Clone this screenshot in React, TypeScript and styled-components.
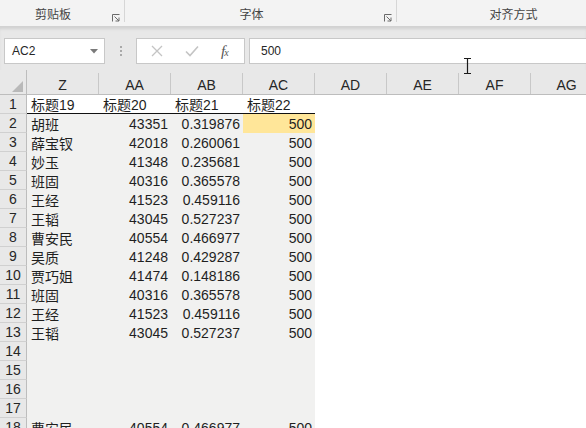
import styled, { createGlobalStyle } from "styled-components";

const GlobalStyle = createGlobalStyle`
  html, body {
    margin: 0;
    padding: 0;
    background: #ffffff;
  }
  body {
    font-family: "Liberation Sans", "Noto Sans CJK SC", sans-serif;
    overflow: hidden;
  }
`;

const COLS = ["Z", "AA", "AB", "AC", "AD", "AE", "AF", "AG"];

type Line = [string, string, string, string] | null;

// 1 = 表头行，其余为数据
const ROWS: Line[] = [
  ["标题19", "标题20", "标题21", "标题22"],
  ["胡班", "43351", "0.319876", "500"],
  ["薛宝钗", "42018", "0.260061", "500"],
  ["妙玉", "41348", "0.235681", "500"],
  ["班固", "40316", "0.365578", "500"],
  ["王经", "41523", "0.459116", "500"],
  ["王韬", "43045", "0.527237", "500"],
  ["曹安民", "40554", "0.466977", "500"],
  ["吴质", "41248", "0.429287", "500"],
  ["贾巧姐", "41474", "0.148186", "500"],
  ["班固", "40316", "0.365578", "500"],
  ["王经", "41523", "0.459116", "500"],
  ["王韬", "43045", "0.527237", "500"],
  null,
  null,
  null,
  null,
  ["曹安民", "40554", "0.466977", "500"],
];

const GROUPS = [
  { label: "剪贴板", width: 125, launcher: true },
  { label: "字体", width: 272, launcher: true },
  { label: "对齐方式", width: 252, launcher: false },
];

const Launcher = () => (
  <svg width="8" height="8" viewBox="0 0 8 8">
    <path d="M0.5 7.5V0.5H7.5" fill="none" stroke="#6a6a6a" strokeWidth="1" />
    <path d="M2.5 2.5L7 7M7 3.5V7H3.5" fill="none" stroke="#6a6a6a" strokeWidth="1" />
  </svg>
);

const App = () => {
  return (
    <Screen>
      <GlobalStyle />
      <Ribbon>
        {GROUPS.map((g) => (
          <Group key={g.label} $width={g.width}>
            <GroupLabel>{g.label}</GroupLabel>
            {g.launcher && (
              <LauncherSlot>
                <Launcher />
              </LauncherSlot>
            )}
          </Group>
        ))}
      </Ribbon>

      <FormulaZone>
        <NameBox>
          <span>AC2</span>
          <svg width="8" height="5" viewBox="0 0 8 5">
            <path d="M0 0H8L4 4.5Z" fill="#7a7a7a" />
          </svg>
        </NameBox>
        <Grip>
          <i />
          <i />
          <i />
        </Grip>
        <FxBox>
          <svg width="12" height="12" viewBox="0 0 12 12">
            <path d="M1 1L11 11M11 1L1 11" stroke="#c4c4c4" strokeWidth="1.3" />
          </svg>
          <svg width="14" height="12" viewBox="0 0 14 12">
            <path d="M1 6.5L5 10.5L13 1.5" fill="none" stroke="#c4c4c4" strokeWidth="1.6" />
          </svg>
          <FxText>
            f<sub>x</sub>
          </FxText>
        </FxBox>
        <FormulaInput>500</FormulaInput>
      </FormulaZone>

      <HeaderRow>
        <Corner>
          <svg width="11" height="11" viewBox="0 0 11 11">
            <path d="M11 0V11H0Z" fill="#b9b9b9" />
          </svg>
        </Corner>
        {COLS.map((c) => (
          <ColHead key={c}>{c}</ColHead>
        ))}
      </HeaderRow>

      {ROWS.map((line, i) => {
        const n = i + 1;
        const isTitle = n === 1;
        return (
          <SheetRow key={n}>
            <RowHead>{n}</RowHead>
            {COLS.map((c, ci) => {
              const inData = ci < 4;
              const text = line && inData ? line[ci] : "";
              const fill = !inData || isTitle ? "#ffffff" : n === 2 && ci === 3 ? "#ffe699" : "#f1f1f0";
              const right = !isTitle && ci > 0 && ci < 4;
              return (
                <Cell key={c} $fill={fill} $right={right} $rule={isTitle && inData}>
                  {text}
                </Cell>
              );
            })}
          </SheetRow>
        );
      })}

      <Cursor width="9" height="16" viewBox="0 0 9 16">
        <path d="M1 0.5H8M4.5 0.5V15.5M1 15.5H8" stroke="#1a1a1a" strokeWidth="1.2" fill="none" />
      </Cursor>
    </Screen>
  );
};

const Screen = styled.div`
  position: relative;
  width: 586px;
  height: 428px;
  overflow: hidden;
  background: #ffffff;
  color: #1f1f1f;
`;

const Ribbon = styled.div`
  display: flex;
  height: 26px;
  background: #f3f3f3;
  border-bottom: 1px solid #d2d2d2;
`;

const Group = styled.div<{ $width: number }>`
  position: relative;
  flex: 0 0 ${(p) => p.$width}px;
  display: flex;
  align-items: center;
  justify-content: center;
  padding: 4px 18px 0 0;
  box-sizing: border-box;
  border-right: 1px solid #d6d6d6;
  margin-bottom: 4px;
`;

const GroupLabel = styled.span`
  font-size: 12px;
  color: #444444;
  font-family: "Noto Sans CJK SC", sans-serif;
`;

const LauncherSlot = styled.span`
  position: absolute;
  right: 4px;
  bottom: 0;
  display: flex;
`;

const FormulaZone = styled.div`
  display: flex;
  align-items: flex-start;
  height: 43px;
  box-sizing: border-box;
  padding: 11px 0 0 4px;
  background: #e8e8e8;
  box-shadow: inset 0 3px 3px -1px rgba(0, 0, 0, 0.1);
`;

const NameBox = styled.div`
  width: 101px;
  height: 26px;
  box-sizing: border-box;
  display: flex;
  align-items: center;
  justify-content: space-between;
  padding: 0 6px 0 7px;
  background: #ffffff;
  border: 1px solid #c8c8c8;
  font-size: 12px;
  color: #262626;
`;

const Grip = styled.div`
  width: 31px;
  height: 26px;
  display: flex;
  flex-direction: column;
  align-items: center;
  justify-content: center;
  gap: 2px;

  i {
    width: 2px;
    height: 2px;
    background: #a9a9a9;
  }
`;

const FxBox = styled.div`
  width: 109px;
  height: 26px;
  box-sizing: border-box;
  display: flex;
  align-items: center;
  gap: 22px;
  padding-left: 14px;
  background: #ffffff;
  border: 1px solid #c8c8c8;
`;

const FxText = styled.span`
  font-family: "Liberation Serif", serif;
  font-style: italic;
  font-size: 15px;
  color: #555555;
  letter-spacing: -1px;

  sub {
    font-size: 10px;
    vertical-align: 0;
  }
`;

const FormulaInput = styled.div`
  flex: 1;
  height: 26px;
  margin-left: 4px;
  box-sizing: border-box;
  display: flex;
  align-items: center;
  padding-left: 11px;
  background: #ffffff;
  border: 1px solid #c8c8c8;
  border-right: none;
  font-size: 12px;
  color: #262626;
`;

const HeaderRow = styled.div`
  display: flex;
  height: 24px;
  background: #e8e8e8;
  border-bottom: 1px solid #bdbdbd;
`;

const Corner = styled.div`
  flex: 0 0 27px;
  box-sizing: border-box;
  display: flex;
  align-items: flex-end;
  justify-content: flex-end;
  padding: 0 3px 2px 0;
  border-right: 1px solid #bdbdbd;
`;

const ColHead = styled.div`
  flex: 0 0 72px;
  box-sizing: border-box;
  display: flex;
  align-items: flex-end;
  justify-content: center;
  padding-bottom: 1px;
  border-right: 1px solid #c8c8c8;
  margin-top: 3px;
  font-size: 14px;
  color: #262626;
`;

const SheetRow = styled.div`
  display: flex;
  height: 19px;
`;

const RowHead = styled.div`
  flex: 0 0 27px;
  box-sizing: border-box;
  display: flex;
  align-items: center;
  justify-content: center;
  background: #e8e8e8;
  border-right: 1px solid #bdbdbd;
  border-bottom: 1px solid #d0d0d0;
  font-size: 14px;
  color: #262626;
`;

const Cell = styled.div<{ $fill: string; $right: boolean; $rule: boolean }>`
  flex: 0 0 72px;
  box-sizing: border-box;
  display: flex;
  align-items: center;
  justify-content: ${(p) => (p.$right ? "flex-end" : "flex-start")};
  padding: 0 3px 0 4px;
  background: ${(p) => p.$fill};
  border-bottom: ${(p) => (p.$rule ? "1px solid #111111" : "none")};
  font-size: 14px;
  color: #1f1f1f;
  white-space: nowrap;
`;

const Cursor = styled.svg`
  position: absolute;
  left: 463px;
  top: 58px;
`;

export default App;
